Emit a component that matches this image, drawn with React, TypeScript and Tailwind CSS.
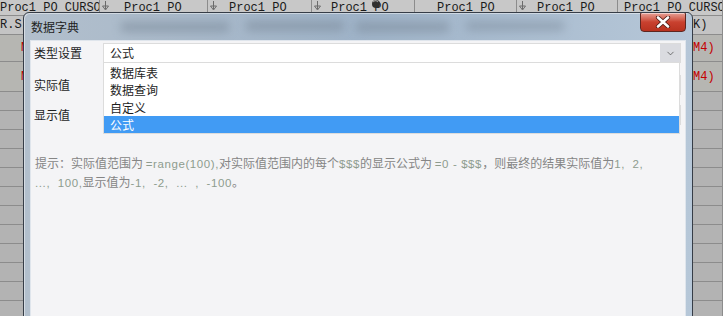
import { ChevronDown } from "lucide-react";

const cjk = { fontFamily: '"Noto Sans CJK SC", "Noto Sans", sans-serif' };

interface Col {
  w: number;
  arrow: boolean;
  text: string;
  pl: number;
}

const cols: Col[] = [
  { w: 100, arrow: false, text: "Proc1_PO_CURSO", pl: 0 },
  { w: 108, arrow: true, text: "Proc1_PO", pl: 15 },
  { w: 104, arrow: true, text: "Proc1_PO", pl: 12 },
  { w: 103, arrow: true, text: "Proc1_PO", pl: 10 },
  { w: 102, arrow: false, text: "Proc1_PO", pl: 22 },
  { w: 101, arrow: true, text: "Proc1_PO", pl: 11 },
  { w: 105, arrow: false, text: "Proc1_PO_CURSOR", pl: 6 },
];

const FilterArrow = () => (
  <svg width="7" height="10" viewBox="0 0 7 10" className="mt-[1px] ml-[2px] shrink-0">
    <line x1="3.5" y1="0" x2="3.5" y2="8" stroke="#6b6b6b" strokeWidth="1" />
    <path d="M0.5 5 L6.5 5 L3.5 9 Z" fill="none" stroke="#6b6b6b" strokeWidth="1" />
  </svg>
);

const Cell = ({ w, children, className = "" }: { w: number; children?: React.ReactNode; className?: string }) => (
  <div
    style={{ width: w }}
    className={`shrink-0 h-full border-r border-[#8c8c8c] flex items-center overflow-hidden whitespace-nowrap ${className}`}
  >
    {children}
  </div>
);

const SheetRow = ({ h, bg, left, right }: { h: number; bg: string; left?: React.ReactNode; right?: React.ReactNode }) => (
  <div style={{ height: h }} className={`flex border-b border-[#8c8c8c] ${bg}`}>
    {cols.map((c, i) => (
      <Cell key={i} w={c.w}>
        {i === 0 ? left : i === 6 ? right : null}
      </Cell>
    ))}
  </div>
);

// red text of the left column peeks out from behind the dialog by two pixels only
const RedTick = () => (
  <span className="ml-[21px] w-[2px] overflow-hidden text-[#c40000] text-[12px]">M</span>
);

const Code = ({ children }: { children: React.ReactNode }) => (
  <span className="font-['Liberation_Sans',sans-serif] text-[11.5px] tracking-[0.6px] text-[#8e9c8e] whitespace-pre">
    {children}
  </span>
);

const Spreadsheet = () => (
  <div className="font-['Liberation_Mono',monospace] text-[12px] text-[#1a1a1a]">
    <div className="flex h-[16px] bg-[#c8c8c8] border-b border-[#8c8c8c]">
      {cols.map((c, i) => (
        <Cell key={i} w={c.w} className="items-start">
          {c.arrow && <FilterArrow />}
          <span style={{ paddingLeft: c.pl }} className="leading-[14px] pt-[1px]">
            {c.text}
          </span>
        </Cell>
      ))}
    </div>
    <SheetRow h={19} bg="bg-[#c4c4c4]" left={<span className="w-[22px] overflow-hidden">R.S</span>} right={<span className="pl-[75px]">K)</span>} />
    <SheetRow h={27} bg="bg-[#b6b6b2]" left={<RedTick />} right={<span className="pl-[75px] text-[#c40000]">M4)</span>} />
    <SheetRow h={30} bg="bg-[#b6b6b2]" left={<RedTick />} right={<span className="pl-[75px] text-[#c40000]">M4)</span>} />
    {Array.from({ length: 12 }).map((_, i) => (
      <SheetRow key={i} h={19} bg="bg-[#b3b3b3]" />
    ))}
  </div>
);

const CloseButton = () => (
  <div className="w-[46px] h-[20px] -mt-[1px] rounded-b-[4px] rounded-t-[2px] border border-[#5e2620] bg-gradient-to-b from-[#e6a096] via-[#c9412f] to-[#b8321f] flex items-center justify-center shadow-[inset_0_1px_0_rgba(255,255,255,0.5)]">
    <svg width="16" height="12" viewBox="0 0 16 12">
      <path d="M3 1.5 L13 10.5 M13 1.5 L3 10.5" stroke="#4a1a14" strokeWidth="4.2" strokeLinecap="round" />
      <path d="M3 1.5 L13 10.5 M13 1.5 L3 10.5" stroke="#ffffff" strokeWidth="2.6" strokeLinecap="round" />
    </svg>
  </div>
);

const TitleBar = () => (
  <div className="relative h-[27px] flex items-start justify-between overflow-hidden">
    <div className="absolute left-[90px] top-[9px] w-[110px] h-[10px] rounded-full bg-[#7d8c9c] blur-[5px] opacity-60" />
    <div className="absolute left-[215px] top-[8px] w-[100px] h-[10px] rounded-full bg-[#7d8c9c] blur-[5px] opacity-60" />
    <div className="absolute left-[325px] top-[9px] w-[95px] h-[10px] rounded-full bg-[#7d8c9c] blur-[5px] opacity-60" />
    <div className="absolute left-[435px] top-[8px] w-[100px] h-[10px] rounded-full bg-[#7d8c9c] blur-[5px] opacity-50" />
    <div className="relative pl-[1px] h-full flex items-center text-[12px] text-[#1e1e1e]" style={cjk}>
      数据字典
    </div>
    <div className="relative">
      <CloseButton />
    </div>
  </div>
);

const items = ["数据库表", "数据查询", "自定义", "公式"];
const itemH = ["h-[17px]", "h-[18px]", "h-[17px]", "h-[17px]"];

const Content = () => (
  <div className="relative flex-1 bg-[#f4f4f6] border border-[#dfe5ec] pl-[3px] pr-[4px] pt-[2px] text-[12px] text-[#1e1e1e]" style={cjk}>
    <div className="flex items-center h-[20px]">
      <div className="w-[69px] shrink-0">类型设置</div>
      <div className="relative flex-1 h-full">
        <div className="h-full flex bg-white border border-[#dcdcdc]">
          <div className="flex-1 flex items-center pl-[6px]">公式</div>
          <div className="w-[20px] bg-[#dadbe0] flex items-center justify-center">
            <ChevronDown size={11} strokeWidth={1.6} color="#4a4a4a" />
          </div>
        </div>
        <div className="absolute left-0 right-[1px] top-[20px] z-10 bg-white border border-t-0 border-[#dcdcdc] pt-[1px]">
          {items.map((t, i) => (
            <div
              key={t}
              className={`${itemH[i]} flex items-center pl-[6px] ${i === 3 ? "bg-[#419bf4] text-white" : ""}`}
            >
              {t}
            </div>
          ))}
        </div>
      </div>
    </div>
    <div className="flex items-center h-[20px] mt-[12px]">
      <div className="w-[69px] shrink-0">实际值</div>
      <div className="flex-1 h-full bg-white border border-[#dcdcdc]" />
    </div>
    <div className="flex items-center h-[20px] mt-[10px]">
      <div className="w-[69px] shrink-0">显示值</div>
      <div className="flex-1 h-full bg-white border border-[#dcdcdc]" />
    </div>
    <div className="mt-[29px] pl-[1px] text-[12px] leading-[18px] text-[#858585] whitespace-nowrap">
      <div>
        提示：实际值范围为 <Code>=range(100),</Code>对实际值范围内的每个<Code>$$$</Code>的显示公式为 <Code>=0 - $$$</Code>
        ，则最终的结果实际值为<Code>{"1,  2,"}</Code>
      </div>
      <div>
        <Code>{"...,  100,"}</Code>显示值为<Code>{"-1,  -2,  ...  ,  -100"}</Code>。
      </div>
    </div>
  </div>
);

export default function App() {
  return (
    <div className="relative w-[723px] h-[316px] overflow-hidden bg-[#b3b3b3]">
      <Spreadsheet />

      {/* busy cursor */}
      <svg width="12" height="12" viewBox="0 0 12 12" className="absolute left-[370px] top-0">
        <circle cx="6" cy="4" r="4" fill="#2f2f2f" />
        <path d="M3 2 A3 3 0 0 1 8 2" stroke="#9a9a9a" strokeWidth="1.2" fill="none" />
      </svg>

      <div className="absolute left-[23px] top-[12px] w-[670px] h-[312px] flex flex-col rounded-t-[6px] border border-[#363d47] bg-gradient-to-r from-[#b2bfcc] via-[#9fb3c8] to-[#b6c7d8] px-[6px] shadow-[inset_1px_1px_0_rgba(255,255,255,0.45)]">
        <TitleBar />
        <Content />
      </div>
    </div>
  );
}
